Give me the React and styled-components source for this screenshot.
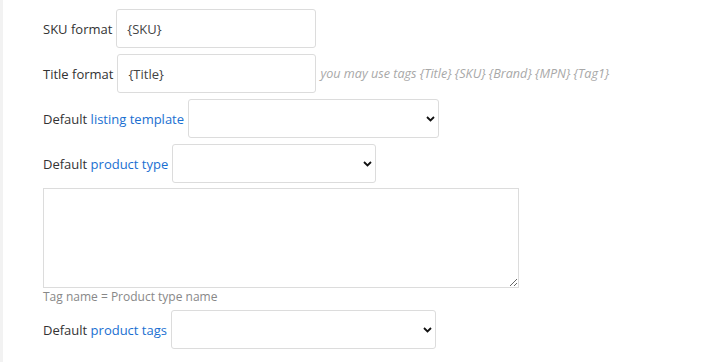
import styled, { createGlobalStyle } from "styled-components";

const GlobalStyle = createGlobalStyle`
  html, body {
    margin: 0;
    padding: 0;
    background: #fff;
  }
  body {
    font-family: "Open Sans", "Liberation Sans", sans-serif;
    font-size: 13px;
    color: #333;
  }
`;

const Page = styled.div`
  min-height: 362px;
  border-left: 3px solid #f2f2f2;
  padding: 9px 0 0 40px;
  box-sizing: border-box;
`;

const Form = styled.div`
  display: flex;
  flex-direction: column;
  gap: 6px;
  align-items: flex-start;
`;

const Row = styled.div`
  display: flex;
  align-items: center;
  gap: 4px;
  height: 39px;
`;

const Label = styled.label`
  white-space: nowrap;
  color: #333;
`;

const Link = styled.a`
  color: #1a6fd1;
  text-decoration: none;
  cursor: pointer;
`;

const TextInput = styled.input`
  width: ${(p) => p.$w || 200}px;
  height: 39px;
  box-sizing: border-box;
  border: 1px solid #dcdcdc;
  border-radius: 3px;
  padding: 0 10px;
  font-family: inherit;
  font-size: 13px;
  color: #444;
  outline: none;
`;

const Hint = styled.span`
  font-style: italic;
  font-size: 12.6px;
  color: #a8a8a8;
  white-space: nowrap;
`;

const SelectWrap = styled.div`
  position: relative;
  width: ${(p) => p.$w}px;
  height: 39px;
`;

const Select = styled.select`
  appearance: none;
  width: 100%;
  height: 100%;
  box-sizing: border-box;
  border: 1px solid #dcdcdc;
  border-radius: 3px;
  background: #fff;
  font-family: inherit;
  font-size: 13px;
  outline: none;
`;

const Chevron = styled.svg`
  position: absolute;
  right: 4px;
  top: 50%;
  margin-top: -3px;
  pointer-events: none;
`;

const TagBox = styled.textarea`
  width: 476px;
  height: 100px;
  box-sizing: border-box;
  border: 1px solid #dcdcdc;
  border-radius: 0;
  margin: -1px 0 0 0;
  font-family: inherit;
  font-size: 13px;
  display: block;
`;

const Note = styled.div`
  font-size: 12px;
  color: #888;
  margin: -6px 0 -1px 0;
  line-height: 17px;
`;

const Dropdown = ({ w }) => (
  <SelectWrap $w={w}>
    <Select defaultValue="">
      <option value=""></option>
    </Select>
    <Chevron width="9" height="6" viewBox="0 0 9 6">
      <path d="M1 1l3.5 3.5L8 1" fill="none" stroke="#111" strokeWidth="1.8" />
    </Chevron>
  </SelectWrap>
);

const App = () => {
  return (
    <>
      <GlobalStyle />
      <Page>
        <Form>
          <Row>
            <Label>SKU format</Label>
            <TextInput defaultValue="{SKU}" $w={200} />
          </Row>
          <Row>
            <Label>Title format</Label>
            <TextInput defaultValue="{Title}" $w={199} />
            <Hint>you may use tags {"{Title} {SKU} {Brand} {MPN} {Tag1}"}</Hint>
          </Row>
          <Row>
            <Label>
              Default <Link>listing template</Link>
            </Label>
            <Dropdown w={251} />
          </Row>
          <Row>
            <Label>
              Default <Link>product type</Link>
            </Label>
            <Dropdown w={204} />
          </Row>
          <TagBox />
          <Note>Tag name = Product type name</Note>
          <Row>
            <Label>
              Default <Link>product tags</Link>
            </Label>
            <Dropdown w={265} />
          </Row>
        </Form>
      </Page>
    </>
  );
};

export default App;
